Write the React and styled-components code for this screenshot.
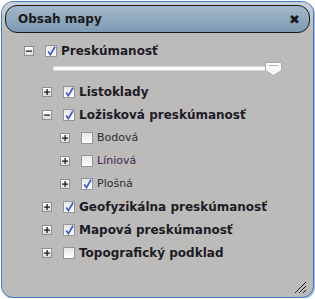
import React from 'react';
import styled, { createGlobalStyle } from 'styled-components';

const Global = createGlobalStyle`
  html, body { margin: 0; padding: 0; background: #ffffff; }
  body { font-family: "DejaVu Sans", Verdana, sans-serif; }
`;

const Panel = styled.div`
  box-sizing: border-box;
  width: 313px;
  height: 297px;
  margin: 1px 0 0 1px;
  border: 1px solid #3f7cc0;
  border-radius: 12px;
  background: #bcbbb9;
  box-shadow: 1px 1px 0 #9fbbdc;
  overflow: hidden;
  position: relative;
`;

const Header = styled.div`
  padding: 3px 3px 0 3px;
  background: linear-gradient(#c7d2dc, #bcbbb9 30px);
`;

const TitleBar = styled.div`
  box-sizing: border-box;
  height: 28px;
  border: 1px solid #1b1b1b;
  border-radius: 12px;
  background: linear-gradient(#a3b8ca, #7d9ab2);
  display: flex;
  align-items: center;
  justify-content: space-between;
  padding: 0 9px 0 12px;
`;

const Title = styled.span`
  font-weight: bold;
  font-size: 12px;
  color: #1a1a1a;
`;

const Close = styled.span`
  font-size: 13px;
  font-weight: bold;
  color: #1a1a1a;
  line-height: 1;
`;

const Tree = styled.div`
  padding: 6px 0 0 22px;
  display: flex;
  flex-direction: column;
`;

const Row = styled.div`
  display: flex;
  align-items: center;
  height: 23px;
  padding-left: ${p => p.level * 18}px;
`;

const Toggle = styled.span`
  box-sizing: border-box;
  width: 10px;
  height: 10px;
  border: 1px solid #8f8f8f;
  background: linear-gradient(#ffffff, #dcdcdc);
  display: flex;
  align-items: center;
  justify-content: center;
  margin-right: 11px;
  flex: none;
`;

const Box = styled.span`
  box-sizing: border-box;
  width: 12px;
  height: 12px;
  border: 1px solid #969696;
  background: linear-gradient(#e6e6e6, #ffffff);
  display: flex;
  align-items: center;
  justify-content: center;
  margin-right: 4px;
  flex: none;
`;

const Label = styled.span`
  font-size: ${p => (p.bold ? 12 : 11)}px;
  font-weight: ${p => (p.bold ? 'bold' : 'normal')};
  color: ${p => p.color || '#1c1b26'};
  white-space: nowrap;
`;

const SliderRow = styled.div`
  position: relative;
  height: 18px;
  margin-left: 29px;
  width: 229px;
`;

const Track = styled.div`
  position: absolute;
  left: 0;
  right: 6px;
  top: 4px;
  height: 3px;
  background: #fbfbfb;
  border: 1px solid #d6d6d6;
  border-radius: 1px;
`;

const Thumb = styled.svg`
  position: absolute;
  right: 0;
  top: 0;
`;

const Grip = styled.svg`
  position: absolute;
  right: 6px;
  bottom: 3px;
`;

const Sign = ({ plus }) => (
  <svg width="6" height="6" viewBox="0 0 6 6">
    <rect x="0" y="2.5" width="6" height="1.2" fill="#111" />
    {plus && <rect x="2.5" y="0" width="1.2" height="6" fill="#111" />}
  </svg>
);

const Check = () => (
  <svg width="9" height="10" viewBox="0 0 9 10">
    <path d="M1.2 5.5 L3.4 8.6 L8 0.8" stroke="#3a5cd0" strokeWidth="1.7" fill="none" />
  </svg>
);

const items = [
  { level: 1, label: 'Listoklady', bold: true, checked: true, open: false },
  { level: 1, label: 'Ložisková preskúmanosť', bold: true, checked: true, open: true },
  { level: 2, label: 'Bodová', checked: false, color: '#2e2d36' },
  { level: 2, label: 'Líniová', checked: false, color: '#3d2852' },
  { level: 2, label: 'Plošná', checked: true, color: '#2e2d36' },
  { level: 1, label: 'Geofyzikálna preskúmanosť', bold: true, checked: true },
  { level: 1, label: 'Mapová preskúmanosť', bold: true, checked: true },
  { level: 1, label: 'Topografický podklad', bold: true, checked: false },
];

export default function App() {
  return (
    <>
      <Global />
      <Panel>
        <Header>
          <TitleBar>
            <Title>Obsah mapy</Title>
            <Close>✖</Close>
          </TitleBar>
        </Header>
        <Tree>
          <Row level={0}>
            <Toggle><Sign /></Toggle>
            <Box><Check /></Box>
            <Label bold>Preskúmanosť</Label>
          </Row>
          <SliderRow>
            <Track />
            <Thumb width="17" height="14" viewBox="0 0 17 14">
              <path d="M0.5 0.5 H16.5 V8.5 L8.5 13.5 L0.5 8.5 Z" fill="#fafafa" stroke="#a9a9a9" />
              <rect x="4" y="3" width="9" height="1" fill="#b5b5b5" />
            </Thumb>
          </SliderRow>
          {items.map(it => (
            <Row key={it.label} level={it.level}>
              <Toggle><Sign plus={!it.open} /></Toggle>
              <Box>{it.checked && <Check />}</Box>
              <Label bold={it.bold} color={it.color}>{it.label}</Label>
            </Row>
          ))}
        </Tree>
        <Grip width="13" height="13" viewBox="0 0 13 13">
          <path d="M1 12 L12 1 M5 12 L12 5 M9 12 L12 9" stroke="#222" strokeWidth="1" />
        </Grip>
      </Panel>
    </>
  );
}
